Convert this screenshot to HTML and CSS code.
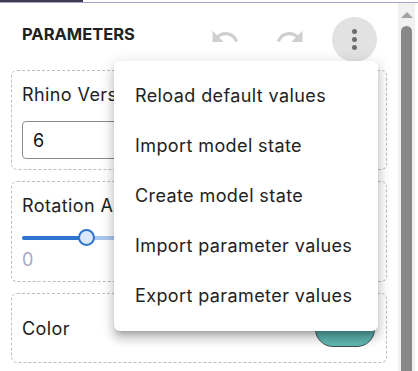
FILE: index.html
```html
<!DOCTYPE html>
<html lang="en">
<head>
    <meta charset="UTF-8">
    <meta name="viewport" content="width=device-width, initial-scale=1.0">
    <title>Parameters</title>
    <link rel="stylesheet" href="styles.css">
</head>
<body>
    <div class="tabbar"><div class="tab-active"></div></div>
    <div class="main">
        <div class="panel">
            <div class="header">
                <h1>PARAMETERS</h1>
                <div class="actions">
                    <button class="icon-btn" disabled>
                        <svg viewBox="0 0 24 24" width="30" height="30"><path d="M12.5 8c-2.65 0-5.05.99-6.9 2.6L2 7v9h9l-3.62-3.62c1.39-1.16 3.16-1.88 5.12-1.88 3.54 0 6.55 2.31 7.6 5.5l2.37-.78C21.08 11.03 17.150 8 12.5 8z"/></svg>
                    </button>
                    <button class="icon-btn redo" disabled>
                        <svg viewBox="0 0 24 24" width="30" height="30"><path d="M18.4 10.6C16.55 8.99 14.15 8 11.5 8c-4.65 0-8.58 3.03-9.96 7.22L3.9 16c1.05-3.19 4.05-5.5 7.6-5.5 1.95 0 3.73.72 5.12 1.88L13 16h9V7l-3.6 3.6z"/></svg>
                    </button>
                    <button class="more-btn">
                        <span class="dot"></span><span class="dot"></span><span class="dot"></span>
                    </button>
                </div>
            </div>

            <div class="card">
                <label class="card-label">Rhino Version</label>
                <input class="text-input" type="text" value="6">
            </div>

            <div class="card">
                <label class="card-label">Rotation Angle</label>
                <div class="slider">
                    <div class="track"><div class="track-fill"></div></div>
                    <div class="thumb"></div>
                </div>
                <div class="slider-min">0</div>
            </div>

            <div class="card card-row">
                <label class="card-label">Color</label>
                <div class="swatch"></div>
            </div>
        </div>
        <div class="scrollbar">
            <div class="scroll-arrow"></div>
            <div class="scroll-thumb"></div>
        </div>
    </div>

    <ul class="menu">
        <li>Reload default values</li>
        <li>Import model state</li>
        <li>Create model state</li>
        <li>Import parameter values</li>
        <li>Export parameter values</li>
    </ul>
</body>
</html>
```

FILE: styles.css
```css
body {
    margin: 0;
    font-family: Inter, "Open Sans", sans-serif;
    color: #222;
    background: #fff;
    overflow: hidden;
    height: 371px;
}
.tabbar {
    height: 2px;
    border-bottom: 1px solid #aaa3c6;
}
.tab-active {
    width: 83px;
    height: 2px;
    background: #3c3c4e;
}
.main {
    display: flex;
    height: 368px;
}
.panel {
    flex: 1;
    padding: 0 11px;
}
.scrollbar {
    width: 17px;
    margin-right: 3px;
    background: #f1f1f1;
    display: flex;
    flex-direction: column;
    align-items: center;
}
.scroll-arrow {
    margin-top: 9px;
    width: 0;
    height: 0;
    border-left: 6px solid transparent;
    border-right: 6px solid transparent;
    border-bottom: 6px solid #a3a3a3;
}
.scroll-thumb {
    margin-top: 8px;
    flex: 1;
    width: 11px;
    background: #888;
    border-radius: 6px 6px 0 0;
}
.header {
    height: 67px;
    display: flex;
    align-items: center;
    justify-content: space-between;
    padding-left: 11px;
}
h1 {
    margin: 0 0 5px;
    font-size: 16.5px;
    font-weight: 700;
    letter-spacing: 0;
    color: #222;
}
.actions {
    display: flex;
    align-items: center;
    margin-right: 10px;
}
.icon-btn {
    border: none;
    background: none;
    padding: 0;
    width: 30px;
    height: 30px;
    margin-right: 35px;
    margin-top: 1px;
}
.icon-btn.redo {
    margin-right: 27px;
}
.icon-btn svg {
    display: block;
    fill: #cfcfcf;
}
.more-btn {
    width: 45px;
    height: 45px;
    border: none;
    border-radius: 50%;
    background: #e2e2e2;
    display: flex;
    flex-direction: column;
    align-items: center;
    justify-content: center;
    gap: 3px;
    padding: 0;
    margin-top: 5px;
}
.dot {
    width: 5px;
    height: 5px;
    border-radius: 50%;
    background: #6e6e6e;
}
.card {
    border: 1px dashed #bdbdbd;
    border-radius: 6px;
    padding: 11px 10px 10px;
    margin-bottom: 11px;
}
.card-label {
    display: block;
    font-size: 18px;
    line-height: 26px;
    letter-spacing: 0.4px;
    margin-bottom: 13px;
    white-space: nowrap;
}
.text-input {
    display: block;
    box-sizing: border-box;
    width: 100%;
    height: 38px;
    border: 1px solid #8a8a8a;
    border-radius: 4px;
    padding: 0 10px;
    font-family: inherit;
    font-size: 18px;
    color: #111;
}
.slider {
    position: relative;
    height: 18px;
    margin-top: -3px;
}
.track {
    position: absolute;
    left: 0;
    right: 0;
    top: 7px;
    height: 4px;
    border-radius: 2px;
    background: #a9c6ef;
}
.track-fill {
    width: 65px;
    height: 4px;
    border-radius: 2px;
    background: #2f74cf;
}
.thumb {
    position: absolute;
    left: 56px;
    top: 0;
    width: 13px;
    height: 13px;
    border: 2.5px solid #2f74cf;
    border-radius: 50%;
    background: #dce9fb;
}
.slider-min {
    font-size: 18px;
    line-height: 22px;
    color: #a9a7c2;
    margin-top: 2px;
}
.card-row {
    display: flex;
    align-items: center;
    justify-content: space-between;
    height: 47px;
}
.card-row .card-label {
    margin: 0;
}
.swatch {
    width: 58px;
    height: 34px;
    border: 1px solid #3b4f4e;
    border-radius: 18px;
    background: linear-gradient(#4fa9a5, #62bab5);
    margin-right: 1px;
}
.menu {
    position: absolute;
    left: 114px;
    top: 61px;
    width: 264px;
    margin: 0;
    padding: 10px 0;
    list-style: none;
    background: #fff;
    border-radius: 6px;
    box-shadow: 0 5px 5px -3px rgba(0,0,0,0.2), 0 8px 10px 1px rgba(0,0,0,0.14), 0 3px 14px 2px rgba(0,0,0,0.12);
}
.menu li {
    height: 50px;
    line-height: 50px;
    padding-left: 21px;
    font-size: 18px;
    letter-spacing: 0.4px;
    color: #222;
    white-space: nowrap;
}
```
